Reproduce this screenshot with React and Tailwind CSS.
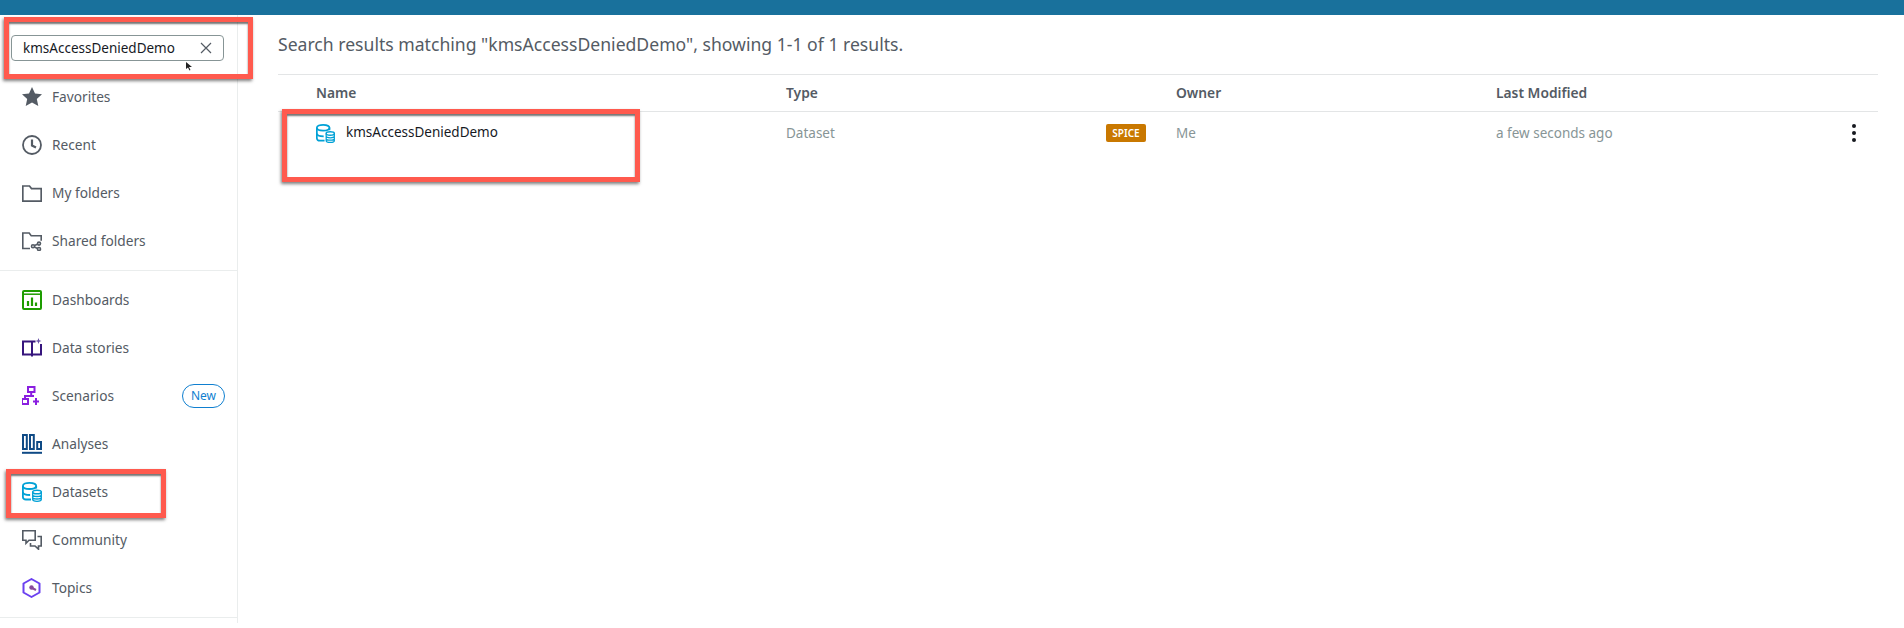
const font = { fontFamily: '"Noto Sans", "Open Sans", sans-serif' };

function Star() {
  return <svg width="20" height="20" viewBox="0 0 20 20"><path d="M10 0l3 6.500 7 .8-5.200 4.800 1.500 7L10 15.600 3.700 19.100l1.500-7L0 7.300l7-.8z" fill="#545b64" /></svg>;
}
function Clock() {
  return <svg width="20" height="20" viewBox="0 0 20 20" fill="none" stroke="#545b64" strokeWidth="1.800"><circle cx="10" cy="10" r="9" /><path d="M10 4.500V10.500L14 12.500" strokeWidth="2.200" /></svg>;
}
function Folder() {
  return <svg width="20" height="20" viewBox="0 0 20 20" fill="none" stroke="#545b64" strokeWidth="1.700"><path d="M.8 3h6.700l2 2.600h9.700v12.600H.8z" /></svg>;
}
function SharedFolder() {
  return <svg width="20" height="20" viewBox="0 0 20 20" fill="none" stroke="#545b64" strokeWidth="1.600"><path d="M8 17.500H.8V2h6.400l2 2.700h10v5" /><circle cx="17" cy="12.600" r="1.500" /><circle cx="17" cy="18" r="1.500" /><circle cx="11" cy="15.300" r="1.500" /><path d="M12.400 14.600l3.200-1.400M12.400 16l3.200 1.400" /></svg>;
}
function Dash() {
  return <svg width="20" height="20" viewBox="0 0 20 20" fill="none"><rect x="1" y="1" width="18" height="18" rx="1" stroke="#1d9c00" strokeWidth="2" /><path d="M1 4.200h18" stroke="#1d9c00" strokeWidth="1.500" /><path d="M6 16v-5M10 16V7.500M14 16v-3.500" stroke="#1d9c00" strokeWidth="2.200" /></svg>;
}
function Stories() {
  return <svg width="20" height="20" viewBox="0 0 20 20" fill="none" stroke="#36157d" strokeWidth="2"><path d="M10 3.500H1v13h9M10 3.500v15M10 16.500h9V6M10 3.500h3.500" /><path d="M16.500 0l.8 2.200 2.200.8-2.200.8-.8 2.200-.8-2.200-2.200-.8 2.200-.8z" fill="#6b55a8" stroke="none" /></svg>;
}
function Scenarios() {
  return <svg width="20" height="20" viewBox="0 0 20 20" fill="none" stroke="#8a1ee0" strokeWidth="2"><rect x="6" y="1" width="6.500" height="5" /><rect x="0" y="13" width="6" height="5" /><path d="M9.200 6v4H3v3M9.200 10h2.800M11 15.500h6M14 12v7" /></svg>;
}
function Analyses() {
  return <svg width="20" height="20" viewBox="0 0 20 20" fill="none" stroke="#0f4a85" strokeWidth="2"><rect x="1" y="1" width="3.800" height="14" /><rect x="8" y="1" width="3.800" height="14" /><rect x="15.200" y="8" width="3.800" height="7" /><path d="M0 18.800h20" /></svg>;
}
function Datasets({ size = 20 }) {
  return (
    <svg width={size} height={size} viewBox="0 0 20 20" fill="none" stroke="#00a1d6" strokeWidth="1.800">
      <path d="M9 17.500H4C2 17.500.9 16.500.9 15V4C.9 2 4 .9 7.500 .9S14.200 2 14.200 4v2.500" />
      <path d="M.9 4C.9 6 4 7 7.500 7s6.700-1 6.700-3M.9 10c0 1.800 3 3 7.200 3" />
      <ellipse cx="15" cy="10" rx="4.300" ry="1.800" strokeWidth="1.500" />
      <path d="M10.700 10v7.500c0 1 2 1.800 4.300 1.800s4.300-.8 4.300-1.800V10M10.700 12.700c0 1 2 1.800 4.300 1.800s4.300-.8 4.300-1.800M10.700 15.200c0 1 2 1.800 4.300 1.800s4.300-.8 4.300-1.800" strokeWidth="1.300" />
    </svg>
  );
}
function Community() {
  return <svg width="20" height="20" viewBox="0 0 20 20" fill="none" stroke="#545b64" strokeWidth="1.600"><path d="M.8.8h12.400v9.500H7l-3 3v-3H.8z" /><path d="M15.500 6.500h3.700V16h-2.700v3.200L13 16H8.500v-3" /></svg>;
}
function Topics() {
  return <svg width="20" height="20" viewBox="0 0 20 20" fill="none" stroke="#6b40f0" strokeWidth="2"><path d="M9.500 1l8 4.500v9l-8 4.500-8-4.500v-9z" strokeLinejoin="round" /><circle cx="9.500" cy="9.500" r="2.200" fill="#8a4a9a" stroke="none" /><path d="M10 10l4 2" stroke="#8a4a9a" /></svg>;
}

const topItems = [
  ["Favorites", <Star />],
  ["Recent", <Clock />],
  ["My folders", <Folder />],
  ["Shared folders", <SharedFolder />],
];
const lowerItems = [
  ["Dashboards", <Dash />],
  ["Data stories", <Stories />],
  ["Scenarios", <Scenarios />, true],
  ["Analyses", <Analyses />],
  ["Datasets", <Datasets />],
  ["Community", <Community />],
  ["Topics", <Topics />],
];

function NavRow({ label, icon, isNew }) {
  return (
    <div className="flex h-12 items-center pl-[22px] pr-3">
      <span className="flex h-5 w-5 shrink-0">{icon}</span>
      <span className="ml-[10px] text-[13.7px] text-[#545b64]">{label}</span>
      {isNew && (
        <span className="ml-auto flex h-6 w-[43px] items-center justify-center rounded-full border border-[#0f7fd0] text-[12px] text-[#0f7fd0]">New</span>
      )}
    </div>
  );
}

function Highlight({ className }) {
  return <div className={"absolute border-[5px] border-[#ff5a4e] shadow-[-1px_2px_3px_rgba(0,0,0,0.5),inset_0_2px_2px_rgba(0,0,0,0.55)] " + className} />;
}

export default function App() {
  return (
    <div className="relative h-[628px] w-full overflow-hidden bg-white" style={font}>
      <div className="h-[15px] bg-[#19719c]" />
      <div className="flex">
        <aside className="h-[608px] w-[238px] shrink-0 border-r border-[#eaeded]">
          <div className="h-[58px] pl-[11px] pr-[13px] pt-5">
            <div className="flex h-[26px] items-center justify-between rounded-[4px] border border-[#879596] pl-[11px] pr-[10px]">
              <span className="text-[13.5px] text-[#16191f]">kmsAccessDeniedDemo</span>
              <svg width="14" height="14" viewBox="0 0 14 14" fill="none" stroke="#545b64" strokeWidth="1.200"><path d="M2 2l10 10M12 2L2 12" /></svg>
            </div>
          </div>
          <nav>
            {topItems.map(([l, i]) => <NavRow key={l} label={l} icon={i} />)}
            <div className="my-[5px] h-px bg-[#eaeded]" />
            {lowerItems.map(([l, i, n]) => <NavRow key={l} label={l} icon={i} isNew={n} />)}
            <div className="mt-[5px] h-px bg-[#eaeded]" />
          </nav>
        </aside>
        <main className="flex-1 pl-10 pr-[26px]">
          <div className="flex h-[59px] items-center pb-px text-[17.6px] text-[#545b64]">
            Search results matching "kmsAccessDeniedDemo", showing 1-1 of 1 results.
          </div>
          <div className="grid h-[38px] grid-cols-[508px_390px_320px_1fr] items-center border-y border-[#e3e5e6] pt-px text-[13.8px] font-semibold text-[#545b64]">
            <span className="pl-[38px]">Name</span>
            <span>Type</span>
            <span>Owner</span>
            <span>Last Modified</span>
          </div>
          <div className="grid grid-cols-[508px_390px_320px_1fr] pt-[11px] text-[13.5px]">
            <div className="flex items-center gap-[11px] pl-[38px] text-[#16191f]">
              <Datasets size={19} />
              <span className="-translate-y-px">kmsAccessDeniedDemo</span>
            </div>
            <div className="flex items-center justify-between pr-[30px] text-[#879596]">
              <span>Dataset</span>
              <span className="flex h-[18px] w-10 items-center justify-center rounded-[2px] bg-[#c97800] text-[10px] font-semibold text-white">SPICE</span>
            </div>
            <div className="flex items-center text-[#879596]">Me</div>
            <div className="flex items-center justify-between pr-[22px] text-[#879596]">
              <span>a few seconds ago</span>
              <span className="flex flex-col gap-[3px]">
                <span className="h-1 w-1 rounded-full bg-[#16191f]" />
                <span className="h-1 w-1 rounded-full bg-[#16191f]" />
                <span className="h-1 w-1 rounded-full bg-[#16191f]" />
              </span>
            </div>
          </div>
        </main>
      </div>
      <Highlight className="left-[4px] top-[17px] h-[62px] w-[249px]" />
      <Highlight className="left-[282px] top-[109px] h-[73px] w-[358px]" />
      <Highlight className="left-[6px] top-[469px] h-[49px] w-[160px]" />
      <svg className="absolute left-[186px] top-[62px]" width="7" height="9" viewBox="0 0 7 9"><path d="M0 0v7l2-1.500 1.500 3 1-.5L3 5h3z" fill="#222" /></svg>
    </div>
  );
}
